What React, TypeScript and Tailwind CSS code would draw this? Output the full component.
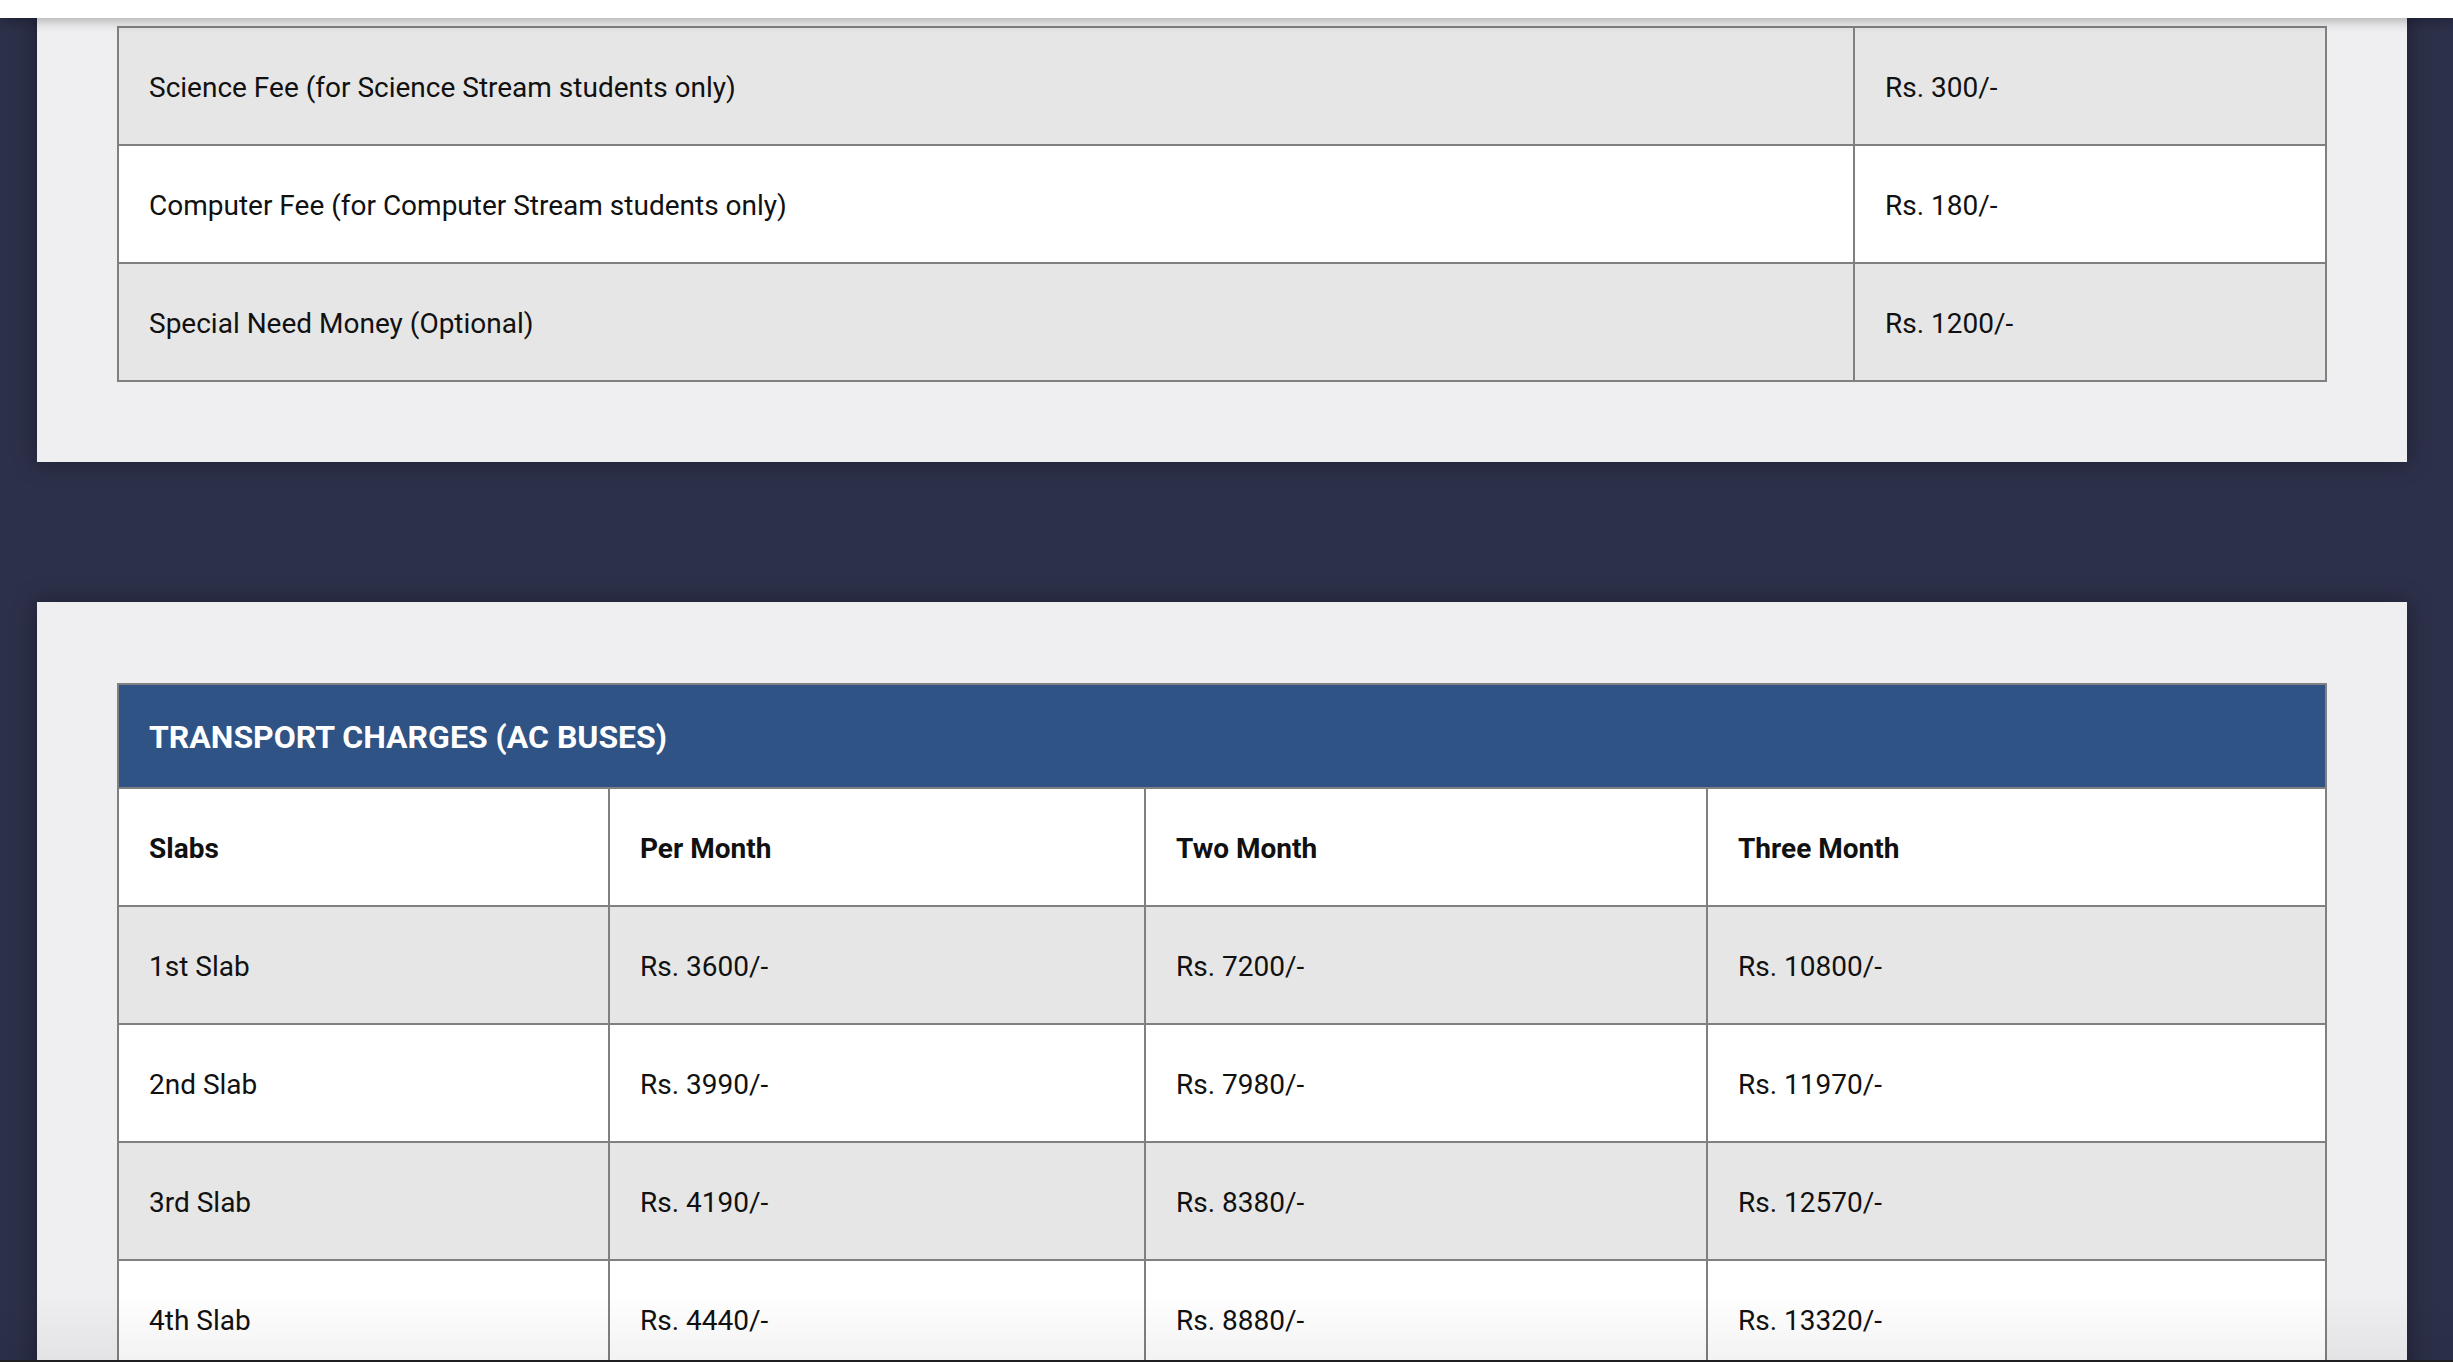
import React from "react";

const feeRows = [
  ["Science Fee (for Science Stream students only)", "Rs. 300/-"],
  ["Computer Fee (for Computer Stream students only)", "Rs. 180/-"],
  ["Special Need Money (Optional)", "Rs. 1200/-"],
];

const slabs = [
  ["1st Slab", "Rs. 3600/-", "Rs. 7200/-", "Rs. 10800/-"],
  ["2nd Slab", "Rs. 3990/-", "Rs. 7980/-", "Rs. 11970/-"],
  ["3rd Slab", "Rs. 4190/-", "Rs. 8380/-", "Rs. 12570/-"],
  ["4th Slab", "Rs. 4440/-", "Rs. 8880/-", "Rs. 13320/-"],
];

function Cell({ children, last, bold }: { children: React.ReactNode; last?: boolean; bold?: boolean }) {
  return (
    <div
      className={`flex items-center pl-[30px] pt-[3px] ${last ? "" : "border-r-2 border-[#808080]"} ${bold ? "font-bold" : ""}`}
    >
      {children}
    </div>
  );
}

export default function App() {
  return (
    <div className="relative h-[1362px] overflow-hidden bg-[#2c3049] font-['Roboto',sans-serif] text-[28px] text-[#111]">
      {/* sticky header strip */}
      <div className="absolute inset-x-0 top-0 z-10 h-[18px] bg-white shadow-[0_3px_12px_rgba(0,0,0,0.28)]" />

      {/* other fees card */}
      <section className="ml-[37px] w-[2370px] bg-[#efeff1] px-[80px] pb-[80px] pt-[26px] shadow-[0_0_22px_rgba(0,0,0,0.35)]">
        <div className="border-x-2 border-t-2 border-[#808080]">
          {feeRows.map(([label, amount], i) => (
            <div
              key={label}
              className={`grid h-[118px] grid-cols-[1736px_469px] border-b-2 border-[#808080] ${i % 2 === 0 ? "bg-[#e6e6e6]" : "bg-white"}`}
            >
              <Cell>{label}</Cell>
              <Cell last>{amount}</Cell>
            </div>
          ))}
        </div>
      </section>

      {/* transport card */}
      <section className="ml-[37px] mt-[140px] w-[2370px] bg-[#efeff1] px-[80px] pb-[80px] pt-[81px] shadow-[0_0_22px_rgba(0,0,0,0.35)]">
        <div className="border-x-2 border-t-2 border-[#808080]">
          <div className="flex h-[104px] items-center border-b-2 border-[#808080] bg-[#2e5384] pl-[30px] pt-[2px] text-[32px] font-bold text-white">
            TRANSPORT CHARGES (AC BUSES)
          </div>
          <div className="grid h-[118px] grid-cols-[491px_536px_562px_616px] border-b-2 border-[#808080] bg-white">
            <Cell bold>Slabs</Cell>
            <Cell bold>Per Month</Cell>
            <Cell bold>Two Month</Cell>
            <Cell bold last>Three Month</Cell>
          </div>
          {slabs.map((row, i) => (
            <div
              key={row[0]}
              className={`grid h-[118px] grid-cols-[491px_536px_562px_616px] border-b-2 border-[#808080] ${i % 2 === 0 ? "bg-[#e6e6e6]" : "bg-white"}`}
            >
              {row.map((v, j) => (
                <Cell key={j} last={j === 3}>
                  {v}
                </Cell>
              ))}
            </div>
          ))}
        </div>
      </section>

      {/* bottom fade */}
      <div className="pointer-events-none absolute inset-x-0 bottom-0 h-[70px] bg-gradient-to-b from-transparent to-black/[0.05]" />
      <div className="absolute inset-x-0 bottom-0 h-[2px] bg-[#1f1f22]" />
    </div>
  );
}
